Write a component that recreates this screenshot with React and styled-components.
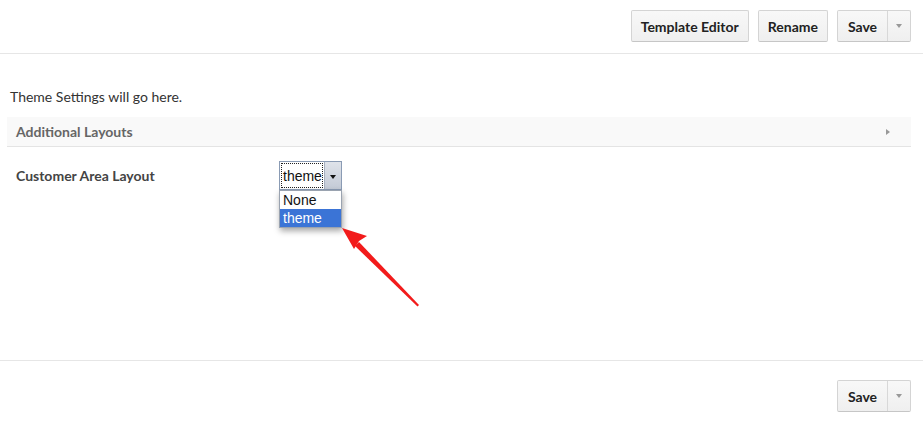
import React from 'react';
import styled, { createGlobalStyle } from 'styled-components';

const GlobalStyle = createGlobalStyle`
    html, body {
        margin: 0;
        padding: 0;
        background: #fff;
    }
    body {
        font-family: Lato, 'Liberation Sans', sans-serif;
        color: #333;
        font-size: 14px;
    }
`;

const Page = styled.div`
    width: 923px;
    height: 425px;
    display: flex;
    flex-direction: column;
    position: relative;
    overflow: hidden;
`;

const Toolbar = styled.div`
    height: 54px;
    box-sizing: border-box;
    border-bottom: 1px solid #e6e6e6;
    display: flex;
    justify-content: flex-end;
    align-items: flex-start;
    gap: 9px;
    padding: 10px 12px 0 0;
`;

const Footer = styled(Toolbar)`
    height: auto;
    border-bottom: none;
    border-top: 1px solid #e6e6e6;
    padding-top: 19px;
    padding-bottom: 13px;
`;

const Button = styled.button`
    height: 32px;
    box-sizing: border-box;
    padding: 0 9px;
    background: linear-gradient(#f8f8f8, #efefef);
    border: 1px solid #d4d4d4;
    border-bottom-color: #c6c6c6;
    border-radius: 2px;
    font-family: Lato, 'Liberation Sans', sans-serif;
    font-weight: 700;
    font-size: 14px;
    color: #222;
    cursor: pointer;
`;

const Split = styled.div`
    display: flex;
    height: 32px;
    box-sizing: border-box;
    border: 1px solid #d4d4d4;
    border-bottom-color: #c6c6c6;
    border-radius: 2px;
    background: linear-gradient(#f8f8f8, #efefef);
    overflow: hidden;
`;

const SplitMain = styled.span`
    width: 49px;
    display: flex;
    align-items: center;
    justify-content: center;
    font-weight: 700;
    font-size: 14px;
    color: #222;
    border-right: 1px solid #d8d8d8;
`;

const SplitCaret = styled.span`
    width: 22px;
    display: flex;
    align-items: center;
    justify-content: center;
    &::after {
        content: '';
        border-left: 3px solid transparent;
        border-right: 3px solid transparent;
        border-top: 4px solid #999;
    }
`;

const Main = styled.div`
    flex: 1;
    padding: 34px 12px 0 7px;
    position: relative;
`;

const Intro = styled.p`
    margin: 0 0 12px 3px;
    font-size: 14px;
    line-height: 17px;
    color: #333;
`;

const SectionBar = styled.div`
    height: 30px;
    box-sizing: border-box;
    background: #f9f9f9;
    border-bottom: 1px solid #e4e4e4;
    display: flex;
    align-items: center;
    justify-content: space-between;
    padding: 0 21px 0 9px;
    font-weight: 700;
    color: #666;
    font-size: 14px;
`;

const RightCaret = styled.span`
    border-top: 3px solid transparent;
    border-bottom: 3px solid transparent;
    border-left: 4px solid #999;
`;

const FieldRow = styled.div`
    display: flex;
    align-items: flex-start;
    padding: 14px 0 0 9px;
`;

const FieldLabel = styled.div`
    width: 263px;
    font-weight: 700;
    font-size: 14px;
    color: #444;
    padding-top: 6px;
`;

const SelectWrap = styled.div`
    position: relative;
`;

const SelectBox = styled.div`
    width: 63px;
    height: 29px;
    box-sizing: border-box;
    display: flex;
    border: 1px solid #8a9bb4;
    background: #fff;
    font-family: 'Liberation Sans', Arial, sans-serif;
    font-size: 14px;
    color: #111;
`;

const SelectValue = styled.span`
    flex: 1;
    display: flex;
    align-items: center;
    padding-left: 3px;
    outline: 1px dotted #222;
    outline-offset: -2px;
`;

const SelectArrow = styled.span`
    width: 16px;
    display: flex;
    align-items: center;
    justify-content: center;
    background: linear-gradient(#dfe3ea, #c3cad6);
    border-left: 1px solid #a6b0c0;
    &::after {
        content: '';
        margin-top: 3px;
        border-left: 3px solid transparent;
        border-right: 3px solid transparent;
        border-top: 4px solid #111;
    }
`;

const Menu = styled.ul`
    position: absolute;
    top: 29px;
    left: 0;
    width: 63px;
    margin: 0;
    padding: 0;
    list-style: none;
    background: #fff;
    border: 1px solid #9aa3b0;
    box-sizing: border-box;
    box-shadow: 1px 3px 6px rgba(0, 0, 0, 0.35);
    font-family: 'Liberation Sans', Arial, sans-serif;
    font-size: 14px;
    z-index: 2;
`;

const MenuItem = styled.li`
    height: 18px;
    line-height: 18px;
    padding-left: 3px;
    color: ${(p) => (p.$active ? '#fff' : '#111')};
    background: ${(p) => (p.$active ? '#3b74d6' : 'transparent')};
`;

const Arrow = styled.svg`
    position: absolute;
    left: 336px;
    top: 170px;
    z-index: 3;
`;

export default function App() {
    return (
        <Page>
            <GlobalStyle />
            <Toolbar>
                <Button>Template Editor</Button>
                <Button>Rename</Button>
                <Split>
                    <SplitMain>Save</SplitMain>
                    <SplitCaret />
                </Split>
            </Toolbar>
            <Main>
                <Intro>Theme Settings will go here.</Intro>
                <SectionBar>
                    <span>Additional Layouts</span>
                    <RightCaret />
                </SectionBar>
                <FieldRow>
                    <FieldLabel>Customer Area Layout</FieldLabel>
                    <SelectWrap>
                        <SelectBox>
                            <SelectValue>theme</SelectValue>
                            <SelectArrow />
                        </SelectBox>
                        <Menu>
                            <MenuItem>None</MenuItem>
                            <MenuItem $active>theme</MenuItem>
                        </Menu>
                    </SelectWrap>
                </FieldRow>
                <Arrow width="90" height="90" viewBox="0 0 90 90">
                    <path d="M83 81 L81.5 82.5 L19 22 L23 18 Z" fill="#f21b1b" />
                    <path d="M6 4 L31 12 L23 17 L18 25 Z" fill="#f21b1b" />
                </Arrow>
            </Main>
            <Footer>
                <Split>
                    <SplitMain>Save</SplitMain>
                    <SplitCaret />
                </Split>
            </Footer>
        </Page>
    );
}
